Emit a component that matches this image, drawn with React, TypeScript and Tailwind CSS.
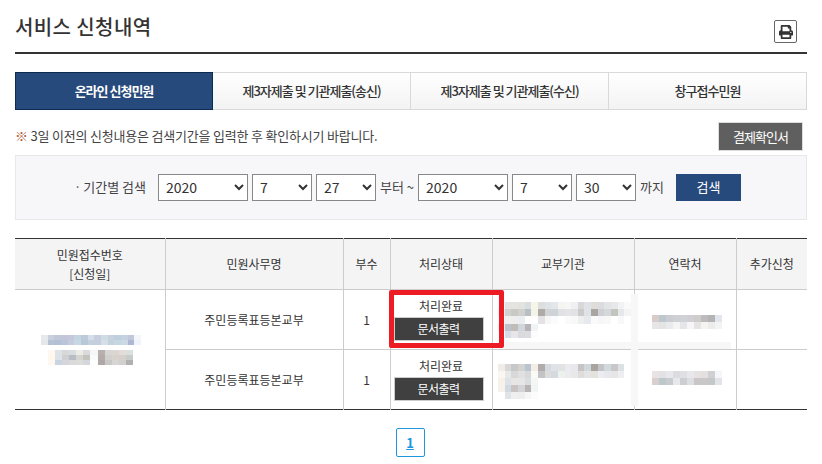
import { FaPrint } from "react-icons/fa";

const FONT = { fontFamily: '"Noto Sans CJK KR", "Noto Sans", sans-serif' };

const tabs = ["온라인 신청민원", "제3자제출 및 기관제출(송신)", "제3자제출 및 기관제출(수신)", "창구접수민원"];
const colWidths = [150, 178, 47, 102, 142, 102, 71];
const headers = ["민원사무명", "부수", "처리상태", "교부기관", "연락처", "추가신청"];

// 블러 처리된 영역 (모자이크)
const idMosaicA = [
  ["#e6e8ee", "#c8d0de", "#c0c8d8", "#c3c6da", "#c4c8da", "#c4d4e2", "#bccadb", "#d4dde8", "#c8cede", "#cfdce6", "#c8d2de", "#bed0e0", "#c6d2e0", "#c0c8da", "#f4f7fa"],
  ["#e4e6ea", "#b6c2d4", "#b4c0d4", "#bcc4da", "#c4ccde", "#c8d8e4", "#b8c8d8", "#c4d0de", "#c4cedc", "#d4dfe8", "#c4d2de", "#c8d6e2", "#ccd8e4", "#aeb8d2", "#eef4fa"],
];
const idMosaicB = [
  ["#fff8f2", "#dfe2e4", "#d8d8da", "#dadde0", "#ecebe4", "#d8dadc", "#f6f6f6", "#b8b0ae", "#d8d6d4", "#dcd6d2", "#e4dcd8", "#d8e0e0"],
  ["#fff6ec", "#dce2e8", "#d0d0d2", "#b8bcc4", "#d4d4d0", "#c4c4bc", "#f8fafc", "#b4aca8", "#d0d0cc", "#d8d2cc", "#d4d0cc", "#c8ccc8"],
  ["#fff8f0", "#c8d4e0", "#d4d6da", "#dadadc", "#dcdcd8", "#d4d8dc", "#fcfeff", "#b0a8a6", "#c8c8c8", "#d8d6d4", "#d0d0cc", "#b0b0b0"],
];
const W = "#ffffff";
const addrMosaicA = [
  ["#fafafa", "#e4e4e4", "#e6e4e0", "#e2e2de", "#d8dde0", "#f6f5ea", "#dedede", "#dfe3e6", "#e4e7ea", "#f4f4f0", "#f6f6f6", "#f0f0f2", "#d8d8d8", "#dfe3e8", "#e0dcd8", "#dcdce0", "#e2e4e6", "#e8e8ea", "#f0f2f4", "#fafafa"],
  ["#f0f0f0", "#d2d2d2", "#c8c8c4", "#d0d0cc", "#b8c0c6", "#f4f3e8", "#aeaaa8", "#d0d2d4", "#ccd4da", "#dfe1e2", "#e4e4e6", "#e2e2e4", "#cccaca", "#dfe3e8", "#a8a6a2", "#d0d0d4", "#d4d8da", "#c4c4be", "#e4e8ea", "#f4f4f4"],
  ["#fcfcfc", "#f0f0f0", "#eeeeee", "#ecedf0", W, "#ffffff", "#e4e2e4", "#f6f6f6", "#fafbfc", W, "#fafafa", "#f8f8f8", "#eeeeee", "#e6eaee", "#fafafa", "#f6f6f8", "#f8f8f8", W, "#f8f8f8", W],
  ["#eeeeee", "#bec4ce", "#c0bcb8", "#d0d6dc", "#b8b4b8", "#f0f4f4", W, W, W, W, W, W, W, W, W, W, W, W, W, W],
  [W, "#d8dce6", "#e8e6e8", "#d8dade", "#dcdce0", "#fcfcfc", W, W, W, W, W, W, W, W, W, W, W, W, W, W],
];
const addrMosaicB = [
  ["#f0ece8", "#d8d8d8", "#c8c8c8", "#d2d2d0", "#b8c4d0", "#f6ece6", "#b0acac", "#d4dadf", "#dfe3e8", "#e2e4e4", "#eaeaf0", "#e8e8ec", "#c8c4c4", "#d0d8dc", "#a8a4a0", "#c4c4c6", "#d0dadc", "#c8c8c8", "#dce2e4", W],
  ["#faf6f2", "#e8e8e8", "#d8d8d8", "#e0e0e0", "#d8d8da", "#fafaf4", "#c4c2c4", "#dcdcdc", "#d4dae0", "#eef0ee", "#ececee", "#e8e8ea", "#e0dcdc", "#e4e4e4", "#e4e2de", "#ececf2", "#e8e8ec", "#e6e6e4", "#eeeef2", W],
  ["#f6f2ea", "#dde2e6", "#e8e6e4", "#e6e6e6", "#dadcde", "#f4f6f6", W, W, W, W, W, W, W, W, W, W, W, W, W, W],
  ["#f6f2ea", "#d0dae2", "#c8c4c4", "#d4d4d8", "#b8b4b4", "#f0f6f6", W, W, W, W, W, W, W, W, W, W, W, W, W, W],
  [W, "#e0e4e6", "#efefef", "#eeeeee", "#f6f6f6", "#fcfcfc", W, W, W, W, W, W, W, W, W, W, W, W, W, W],
];
const telMosaicA = [
  ["#d8ccc8", "#bcc8ce", "#cccdd2", "#cfd0d4", "#cfd2d6", "#d0d0d4", "#d0cccc", "#bcbcbe", "#b4b4b4", "#e0e6ec"],
  ["#e6e6e6", "#e4e4e4", "#e8eaec", "#f4f4f4", "#e6e6e8", "#f6f6f8", "#e4e4e4", "#f6f4f0", "#ececec", "#f2f3f4"],
];
const telMosaicB = [
  ["#e8e2e2", "#e2e2e4", "#e8e8ec", "#dcdce0", "#e0e0e2", "#e8e8ec", "#e6e2e2", "#e4e0e0", "#d0d0d4", "#f4f6fa"],
  ["#d8d0ce", "#bcc8ca", "#c8ccd0", "#e8e8ec", "#ccced2", "#dcdee0", "#c8c6c6", "#c8c8c8", "#c4c8c8", "#e2e4ea"],
];

function Mosaic({ rows, w = 7, h = 7 }: { rows: string[][]; w?: number; h?: number }) {
  return (
    <svg width={rows[0].length * w} height={rows.length * h} className="block" shapeRendering="crispEdges">
      {rows.map((row, y) =>
        row.map((c, x) => <rect key={`${x}-${y}`} x={x * w} y={y * h} width={w + 0.5} height={h} fill={c} />),
      )}
    </svg>
  );
}

function DateSelect({ value, width }: { value: string; width: string }) {
  return (
    <select
      defaultValue={value}
      className={`h-[27px] ${width} border border-[#888888] bg-white pl-[3px] text-[14px] text-[#333333]`}
    >
      <option>{value}</option>
    </select>
  );
}

function StatusCell() {
  return (
    <div className="flex flex-col items-center pb-[2px]">
      <span className="text-[12px] leading-[20px] text-[#333333]">처리완료</span>
      <button className="mt-[1px] ml-[3px] h-[24px] w-[90px] self-start border border-[#cccccc] bg-[#404040] text-[12px] leading-none tracking-[-0.6px] text-white">
        문서출력
      </button>
    </div>
  );
}

export default function App() {
  return (
    <div className="h-[464px] w-[822px] overflow-hidden bg-white px-[15px] text-[#333333]" style={FONT}>
      <div className="flex h-[54px] items-start justify-between border-b-2 border-[#333333]">
        <h1 className="pt-[12px] text-[20px] leading-[30px] font-medium tracking-[0.4px] text-[#333333]">
          서비스 신청내역
        </h1>
        <button className="mt-[20px] mr-[10px] flex h-[23px] w-[23px] items-center justify-center rounded-[2px] border border-[#666666] bg-white text-[#333333]">
          <FaPrint className="h-[14px] w-[14px]" />
        </button>
      </div>

      <div className="mt-[18px] flex h-[38px]">
        {tabs.map((t, i) =>
          i === 0 ? (
            <div
              key={t}
              className="flex w-[198px] items-center justify-center border border-[#0f2a50] bg-[#274a7c] text-[13px] font-bold tracking-[-1px] text-white"
            >
              {t}
            </div>
          ) : (
            <div
              key={t}
              className="flex flex-1 items-center justify-center border border-l-0 border-[#d9d9d9] bg-gradient-to-b from-white to-[#f3f3f3] text-[13px] font-medium tracking-[-1px] text-[#333333]"
            >
              {t}
            </div>
          ),
        )}
      </div>

      <div className="mt-[12px] flex h-[29px] items-center justify-between pr-[4px]">
        <p className="pb-[1px] text-[13px] tracking-[-0.2px] text-[#444444]">
          <span className="text-[#b0603c]">※</span> 3일 이전의 신청내용은 검색기간을 입력한 후 확인하시기 바랍니다.
        </p>
        <button className="h-[29px] w-[85px] border border-[#dddddd] bg-[#5f5f5f] text-[13px] tracking-[-1px] text-white">
          결제확인서
        </button>
      </div>

      <div className="mt-[4px] flex h-[65px] items-center border border-[#e8e8ec] bg-[#f7f7fa] pb-[1px] pl-[58px]">
        <span className="mr-[12px] text-[13px] text-[#444444]">
          <span className="mr-[2px] text-[#555555]">·</span>기간별 검색
        </span>
        <div className="flex items-center gap-[4px]">
          <DateSelect value="2020" width="w-[90px]" />
          <DateSelect value="7" width="w-[60px]" />
          <DateSelect value="27" width="w-[60px]" />
          <span className="text-[13px] text-[#444444]">부터 ~</span>
          <DateSelect value="2020" width="w-[90px]" />
          <DateSelect value="7" width="w-[60px]" />
          <DateSelect value="30" width="w-[60px]" />
          <span className="text-[13px] text-[#444444]">까지</span>
          <button className="ml-[8px] h-[27px] w-[65px] bg-[#274a7c] text-[13px] text-white">검색</button>
        </div>
      </div>

      <div className="relative mt-[18px]">
        <table className="w-[792px] table-fixed border-collapse border-y border-y-[#333333] text-[12px] text-[#333333]">
          <colgroup>
            {colWidths.map((w, i) => (
              <col key={i} style={{ width: w }} />
            ))}
          </colgroup>
          <thead>
            <tr className="h-[51px] border-b border-[#cccccc] bg-[#f4f4f4]">
              <th className="border-r border-[#cccccc] text-[12px] leading-[19px] font-normal">
                민원접수번호
                <br />
                [신청일]
              </th>
              {headers.map((h, i) => (
                <th key={h} className={`font-normal ${i < 5 ? "border-r border-[#cccccc]" : ""}`}>
                  {h}
                </th>
              ))}
            </tr>
          </thead>
          <tbody>
            <tr className="h-[60px] border-b border-[#cccccc]">
              <td rowSpan={2} className="border-r border-[#cccccc]">
                <div className="flex flex-col items-center gap-[5px] pl-[2px]">
                  <Mosaic rows={idMosaicA} w={6.67} h={5} />
                  <Mosaic rows={idMosaicB} w={7.08} h={5} />
                </div>
              </td>
              <td className="border-r border-[#cccccc] text-center">주민등록표등본교부</td>
              <td className="border-r border-[#cccccc] text-center">1</td>
              <td className="border-r border-[#cccccc]">
                <StatusCell />
              </td>
              <td className="border-r border-[#cccccc] pl-[5px]">
                <Mosaic rows={addrMosaicA} w={6.65} h={7.2} />
              </td>
              <td className="border-r border-[#cccccc]">
                <div className="flex justify-center pt-[5px] pl-[4px]">
                  <Mosaic rows={telMosaicA} />
                </div>
              </td>
              <td />
            </tr>
            <tr className="h-[60px]">
              <td className="border-r border-[#cccccc] text-center">주민등록표등본교부</td>
              <td className="border-r border-[#cccccc] text-center">1</td>
              <td className="border-r border-[#cccccc]">
                <StatusCell />
              </td>
              <td className="border-r border-[#cccccc] pt-[3px] pl-[5px]">
                <Mosaic rows={addrMosaicB} w={6.65} h={7} />
              </td>
              <td className="border-r border-[#cccccc]">
                <div className="flex justify-center pb-[3px] pl-[4px]">
                  <Mosaic rows={telMosaicB} />
                </div>
              </td>
              <td />
            </tr>
          </tbody>
        </table>
        {/* 블러 자국 */}
        <div className="absolute top-[56px] left-[616px] h-[112px] w-[7px] bg-[#f7f7f7]" />
        <div className="absolute top-[104px] left-[490px] h-[7px] w-[226px] bg-[#f7f7f7]" />
        {/* 빨간 강조 상자 */}
        <div className="absolute top-[52px] left-[374px] h-[58px] w-[115px] rounded-[2px] border-[5px] border-[#ed1c24]" />
      </div>

      <div className="mt-[18px] flex justify-center pr-[2px]">
        <a className="flex h-[29px] w-[29px] items-center justify-center rounded-[2px] border border-[#1e96e0] text-[13px] font-bold text-[#1e96e0] underline">
          1
        </a>
      </div>
    </div>
  );
}
